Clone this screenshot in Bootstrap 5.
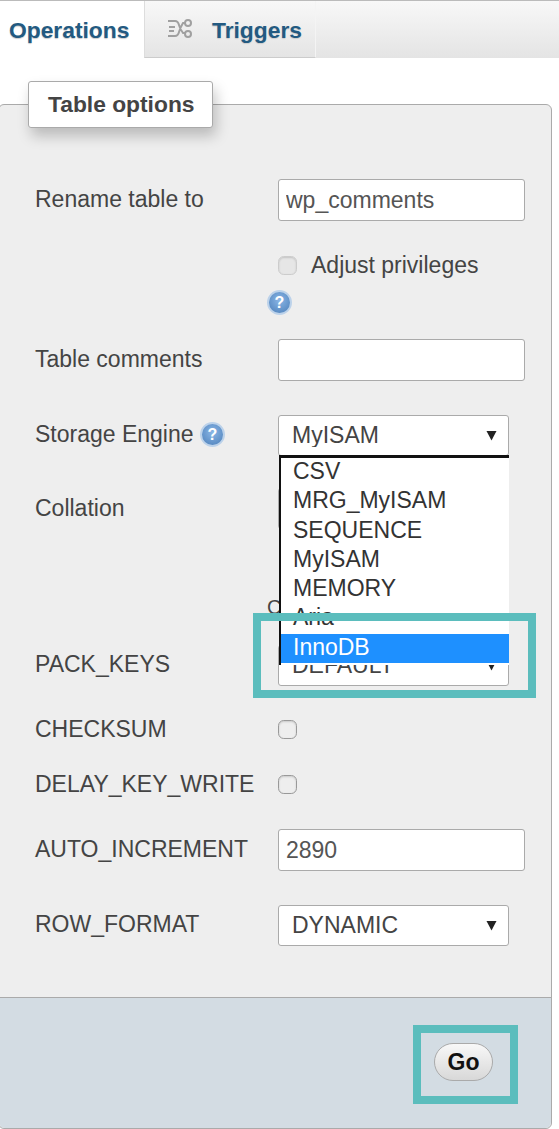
<!DOCTYPE html>
<html lang="en"><head><meta charset="utf-8"><title>Table options</title>
<link href="https://cdn.jsdelivr.net/npm/bootstrap@5.3.0/dist/css/bootstrap.min.css" rel="stylesheet">
<style>
html,body{margin:0;height:100%;overflow:hidden;background:#fff}
body{font-family:"Liberation Sans",Arial,sans-serif;color:#444;font-size:23px}
.pg{position:relative;width:559px;height:1129px;overflow:hidden}
.tabbar{height:58px;border-top:1px solid #bbb;background:linear-gradient(#f8f8f8,#e4e4e4)}
.tabx{color:#235a81;font-weight:700;font-size:22.8px;line-height:1;text-decoration:none;text-shadow:0 1px 1px #ccc}
.tabx.on{width:144px;height:57px;background:#fff;padding-left:9px;padding-top:18px}
.tabx.off{width:172px;height:57px;border-right:1px solid #f4f4f4;border-left:1px solid #ddd;border-bottom:1px solid #ccc;padding-left:21px;padding-top:18px;gap:19px}
.trigico{margin-top:-1px}
.fset{position:absolute;left:-2px;top:104px;width:554px;height:1025px;background:#eee;border:1px solid #aaa;border-radius:6px;display:flex;flex-direction:column}
.legendbox{position:absolute;left:28px;top:81px;width:185px;height:47px;background:#fff;border:1px solid #aaa;border-radius:3px;box-shadow:3px 8px 14px rgba(0,0,0,.22);font-weight:700;font-size:22.8px;line-height:45px;padding-left:19px;color:#444;z-index:2}
.fbody{flex:1;padding:74px 0 0 36px}
.lab{width:243px;flex:none;margin-bottom:2px}
.lab.flat{margin-bottom:0}
.lab.up3{margin-bottom:3px}
.row-a{height:42px}
.row-s{height:41px}
.row-c{height:19px}
.txt{height:42px;width:247px;padding:0 7px;border:1px solid #aaa;border-radius:3px;font-size:23px;color:#555;box-shadow:none;font-family:inherit;line-height:1}
.sel{height:41px;width:231px;padding:0 0 0 13px;border:1px solid #aaa;border-radius:3px;font-size:23px;color:#444;font-family:inherit;line-height:1;background-color:#fff;background-size:11px 11px;background-position:right 11px center;background-image:url("data:image/svg+xml,%3Csvg xmlns='http://www.w3.org/2000/svg' viewBox='0 0 11 11'%3E%3Cpath d='M0.5 1h10L5.5 10.500z' fill='%23222'/%3E%3C/svg%3E")}
.chk{width:19px;height:19px;margin:0;border:1px solid #999;border-radius:3px;background-color:#eee;box-shadow:inset 0 1px 2px rgba(0,0,0,.15)}
.chk.dim{background-color:#e6e6e6;border-color:#ccc;opacity:1}
.ddl{position:absolute;left:1px;top:40px;width:230px;height:210px;background:#fff;border-top:3px solid #111;border-left:2px solid #111;z-index:3;font-size:23px;color:#333;line-height:27.5px;overflow:hidden}
.ddl div{padding-left:12px;height:29.3px}
.ddl .hit{background:#1e90ff;color:#fff}
.tealbox{position:absolute;border:8px solid #5bbdbd;z-index:4}
.t1{left:253px;top:613px;width:283px;height:85px}
.t2{left:413px;top:1025px;width:105px;height:79px}
.ffoot{height:131px;background:#d3dce3;border-top:1px solid #aaa;border-radius:0 0 6px 6px;padding:45px 58px 0 0}
.gobtn{width:59px;height:38px;border:1px solid #aaa;border-radius:19px;background:linear-gradient(#f8f8f8,#d8d8d8);font-weight:700;font-size:23px;line-height:1;color:#111;padding:0}
.hlp{width:25px;height:25px;flex:none;display:block}
.r-adjust{margin:27px 0 0 243px}
.adj-t{margin-left:14px}
.r-help{margin:7.5px 0 0 232px}
.r-comm{margin-top:24px}
.gap-help{gap:6px}
.mt34{margin-top:34px}
.mt32{margin-top:32px}
.mt42{margin-top:42px}
.mt36{margin-top:36px}
.mt35{margin-top:35px}
.peek{margin:68px 0 0 232px;height:6px;line-height:20px;font-size:20px}
</style></head>
<body>
<div class="pg">
  <svg width="0" height="0" class="position-absolute"><defs><radialGradient id="hg" cx="50%" cy="40%" r="60%"><stop offset="0" stop-color="#8ab6e6"/><stop offset="1" stop-color="#5688c0"/></radialGradient></defs></svg>
  <div class="tabbar d-flex">
    <a class="tabx on d-block" href="#">Operations</a>
    <a class="tabx off d-flex" href="#">
      <svg class="trigico" width="27" height="22" viewBox="0 0 27 22" fill="none" stroke="#a0a0a0" stroke-width="2"><path d="M2 3h7q3 0 4 4t4 8h3M3 9h6M2 18h7q3 0 4-4t4-9h3M3 13h5"/><circle cx="22" cy="5" r="3"/><circle cx="22" cy="16" r="3"/></svg>
      <span>Triggers</span>
    </a>
  </div>
  <div class="legendbox">Table options</div>
  <div class="fset">
    <div class="fbody">
      <div class="d-flex align-items-center row-a"><div class="lab">Rename table to</div><input class="form-control txt" value="wp_comments"></div>
      <div class="d-flex align-items-center r-adjust"><input type="checkbox" class="form-check-input chk dim" disabled><span class="adj-t">Adjust privileges</span></div>
      <svg class="hlp r-help" viewBox="0 0 25 25"><circle cx="12.500" cy="12.500" r="11.500" fill="url(#hg)" stroke="#bcd2ea" stroke-width="2"/><text x="12.500" y="18" text-anchor="middle" font-family="Liberation Sans" font-weight="700" font-size="16" fill="#fff">?</text></svg>
      <div class="d-flex align-items-center row-a r-comm"><div class="lab">Table comments</div><input class="form-control txt"></div>
      <div class="d-flex align-items-center row-s mt34">
        <div class="lab up3 d-flex align-items-center gap-help">Storage Engine <svg class="hlp" viewBox="0 0 25 25"><circle cx="12.500" cy="12.500" r="11.500" fill="url(#hg)" stroke="#bcd2ea" stroke-width="2"/><text x="12.500" y="18" text-anchor="middle" font-family="Liberation Sans" font-weight="700" font-size="16" fill="#fff">?</text></svg></div>
        <div class="position-relative">
          <select class="form-select sel"><option>MyISAM</option></select>
          <div class="ddl"><div>CSV</div><div>MRG_MyISAM</div><div>SEQUENCE</div><div>MyISAM</div><div>MEMORY</div><div>Aria</div><div class="hit">InnoDB</div></div>
        </div>
      </div>
      <div class="d-flex align-items-center row-s mt32"><div class="lab flat">Collation</div><select class="form-select sel"><option>utf8_general_ci</option></select></div>
      <div class="peek">C</div>
      <div class="d-flex align-items-center row-s mt42"><div class="lab">PACK_KEYS</div><select class="form-select sel"><option>DEFAULT</option></select></div>
      <div class="d-flex align-items-center row-c mt34"><div class="lab flat">CHECKSUM</div><input type="checkbox" class="form-check-input chk"></div>
      <div class="d-flex align-items-center row-c mt36"><div class="lab flat">DELAY_KEY_WRITE</div><input type="checkbox" class="form-check-input chk"></div>
      <div class="d-flex align-items-center row-a mt35"><div class="lab">AUTO_INCREMENT</div><input class="form-control txt" value="2890"></div>
      <div class="d-flex align-items-center row-s mt34"><div class="lab">ROW_FORMAT</div><select class="form-select sel"><option>DYNAMIC</option></select></div>
    </div>
    <div class="ffoot d-flex justify-content-end align-items-start"><button class="btn gobtn" type="button">Go</button></div>
  </div>
  <div class="tealbox t1"></div>
  <div class="tealbox t2"></div>
</div>
<script src="https://cdn.jsdelivr.net/npm/bootstrap@5.3.0/dist/js/bootstrap.bundle.min.js"></script>
</body></html>
